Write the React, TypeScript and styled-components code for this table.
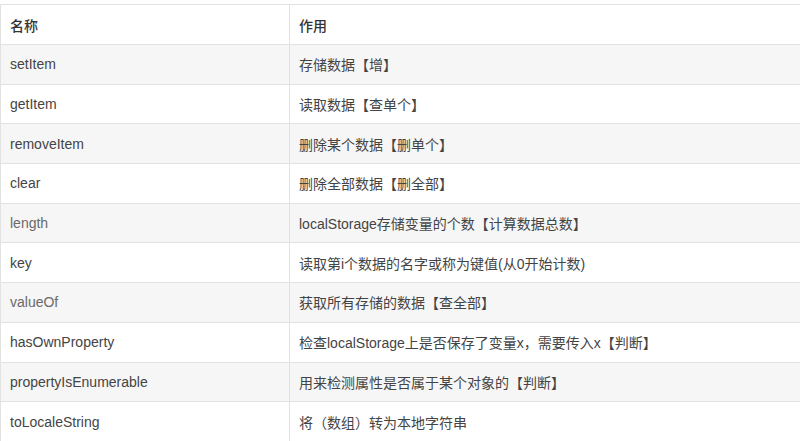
import styled, { createGlobalStyle } from 'styled-components';

const GlobalStyle = createGlobalStyle`
  html, body {
    margin: 0;
    padding: 0;
    background: #ffffff;
  }
  body {
    font-family: "Liberation Sans", "Noto Sans CJK SC", sans-serif;
  }
`;

const Page = styled.div`
  padding-top: 4px;
  width: 800px;
  overflow: hidden;
`;

const Table = styled.table`
  width: 801px;
  border-collapse: collapse;
  border-spacing: 0;
  table-layout: fixed;
  font-size: 14px;
  color: #444;
`;

const HeadCell = styled.th<{ $w?: number }>`
  width: ${props => (props.$w ? `${props.$w}px` : 'auto')};
  height: 39px;
  padding: 0 10px 0 9px;
  text-align: left;
  font-weight: 500;
  color: #333;
  border: 1px solid #e2e2e2;
  background: #fff;
`;

const Row = styled.tr<{ $striped: boolean }>`
  background: ${props => (props.$striped ? '#f6f6f6' : '#ffffff')};
`;

const Cell = styled.td<{ $muted?: boolean }>`
  height: 38.7px;
  padding: 0 10px 0 9px;
  border: 1px solid #e2e2e2;
  color: ${props => (props.$muted ? '#6a6a6a' : '#444')};
  white-space: nowrap;
`;

const methods = [
  { name: 'setItem', desc: '存储数据【增】' },
  { name: 'getItem', desc: '读取数据【查单个】' },
  { name: 'removeItem', desc: '删除某个数据【删单个】' },
  { name: 'clear', desc: '删除全部数据【删全部】' },
  { name: 'length', desc: 'localStorage存储变量的个数【计算数据总数】', muted: true },
  { name: 'key', desc: '读取第i个数据的名字或称为键值(从0开始计数)' },
  { name: 'valueOf', desc: '获取所有存储的数据【查全部】', muted: true },
  { name: 'hasOwnProperty', desc: '检查localStorage上是否保存了变量x，需要传入x【判断】' },
  { name: 'propertyIsEnumerable', desc: '用来检测属性是否属于某个对象的【判断】' },
  { name: 'toLocaleString', desc: '将（数组）转为本地字符串' },
];

const App = () => {
  return (
    <Page>
      <GlobalStyle />
      <Table>
        <thead>
          <tr>
            <HeadCell $w={269}>名称</HeadCell>
            <HeadCell>作用</HeadCell>
          </tr>
        </thead>
        <tbody>
          {methods.map((m, i) => (
            <Row key={m.name} $striped={i % 2 === 0}>
              <Cell $muted={m.muted}>{m.name}</Cell>
              <Cell>{m.desc}</Cell>
            </Row>
          ))}
        </tbody>
      </Table>
    </Page>
  );
};

export default App;
